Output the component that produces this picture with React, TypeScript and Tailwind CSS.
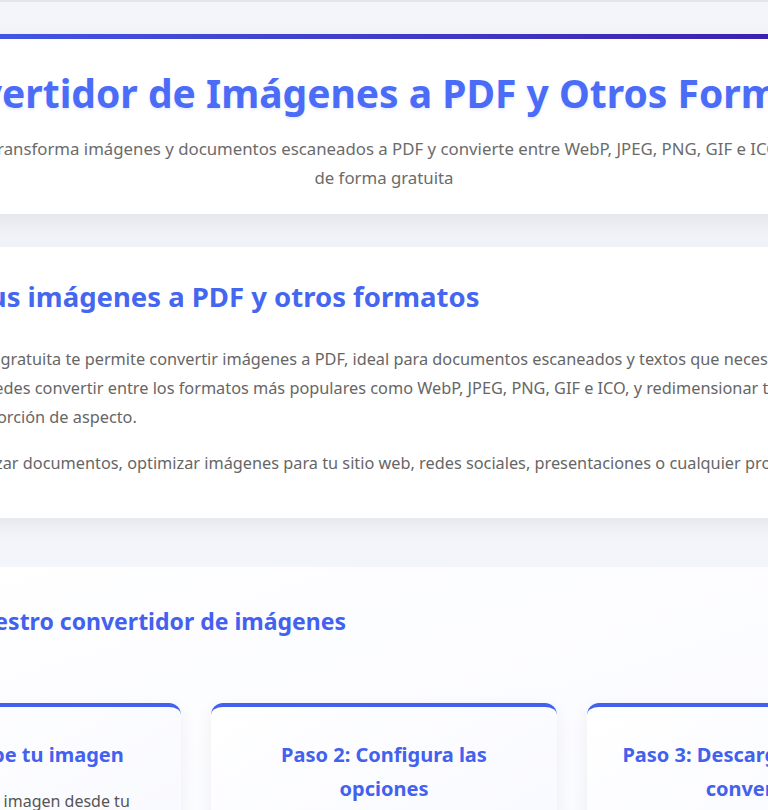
const steps = [
  {
    title: "Paso 1: Sube tu imagen",
    text: "Selecciona una imagen desde tu dispositivo o arrástrala al área de carga.",
  },
  {
    title: "Paso 2: Configura las opciones",
    text: "Elige el formato de salida, la calidad y el tamaño que necesites.",
  },
  {
    title: "Paso 3: Descarga tu imagen convertida",
    text: "Haz clic en convertir y descarga tu archivo listo al instante.",
  },
];

export default function App() {
  return (
    <main
      className="h-screen overflow-hidden flex justify-center border-t-2 border-[#e4e5ea] bg-[#f4f5fa] text-[#666]"
      style={{ fontFamily: '"Noto Sans", "Open Sans", sans-serif' }}
    >
      <div className="w-[1160px] shrink-0 pt-8">
        {/* Header */}
        <header className="overflow-hidden rounded-xl bg-white text-center shadow-[0_10px_25px_rgba(0,0,0,0.07)]">
          <div className="h-[5px] bg-gradient-to-r from-[#4361ee] to-[#3a0ca3]" />
          <div className="px-10 pt-[29px] pb-[22px]">
            <h1 className="text-[39px] font-bold leading-[50px] text-[#4a6cf7] [text-shadow:0_2px_3px_rgba(67,97,238,0.12)]">
              Convertidor de Imágenes a PDF y Otros Formatos
            </h1>
            <p className="mx-auto mt-4 max-w-[805px] text-[16.8px] leading-[29px] text-[#6b6b6b]">
              Transforma imágenes y documentos escaneados a PDF y convierte entre WebP, JPEG, PNG, GIF e ICO de forma gratuita
            </p>
          </div>
        </header>

        {/* Intro */}
        <section className="mt-[33px] rounded-xl bg-white px-8 pt-[31px] pb-[24px] shadow-[0_6px_20px_rgba(0,0,0,0.07)]">
          <h2 className="text-[27.5px] font-bold leading-[38px] text-[#4567f0]">
            Convierte tus imágenes a PDF y otros formatos
          </h2>
          <p className="mt-[29px] text-[16.3px] leading-[29px]">
            Nuestra herramienta gratuita te permite convertir imágenes a PDF, ideal para documentos escaneados y textos que necesitas digitalizar. Además, también puedes convertir entre los formatos más populares como WebP, JPEG, PNG, GIF e ICO, y redimensionar tus imágenes manteniendo la proporción de aspecto.
          </p>
          <p className="mt-[17px] mb-4 text-[16.3px] leading-[29px]">
            Perfecto para digitalizar documentos, optimizar imágenes para tu sitio web, redes sociales, presentaciones o cualquier proyecto.
          </p>
        </section>

        {/* How to */}
        <section className="mt-[49px] rounded-xl bg-gradient-to-br from-white to-[#f8f9ff] px-8 pt-[38px] pb-10">
          <h2 className="text-[23px] font-bold leading-[32px] text-[#4361ee]">
            Cómo usar nuestro convertidor de imágenes
          </h2>
          <div className="mt-[66px] grid grid-cols-3 gap-[30px]">
            {steps.map((s) => (
              <div
                key={s.title}
                className="rounded-xl border-t-4 border-[#4361ee] bg-gradient-to-br from-white to-[#f7f8ff] px-[35px] pt-[31px] pb-8 text-center shadow-[0_5px_18px_rgba(0,0,0,0.06)]"
              >
                <h3 className="text-[20px] font-bold leading-[34px] text-[#4361ee]">{s.title}</h3>
                <p className="mt-4 text-[16px] leading-[26px] text-[#555]">{s.text}</p>
              </div>
            ))}
          </div>
        </section>
      </div>
    </main>
  );
}
